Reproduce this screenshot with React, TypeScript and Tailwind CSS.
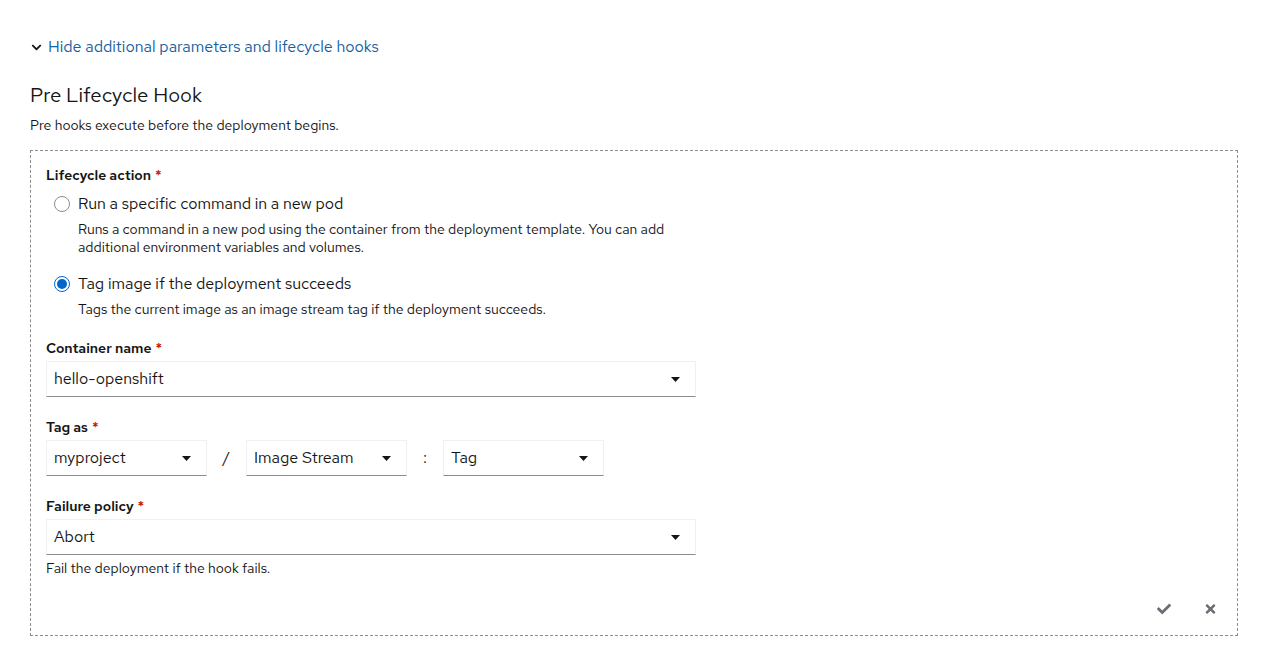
import React from 'react';

const font = { fontFamily: '"Red Hat Text", Inter, "Noto Sans", sans-serif' };

function Caret() {
  return (
    <svg width="9" height="5" viewBox="0 0 9 5" className="shrink-0">
      <path d="M0 0h9L4.5 5z" fill="#151515" />
    </svg>
  );
}

function Select({ value, className }: { value: string; className: string }) {
  return (
    <div
      className={`flex items-center justify-between h-[36px] pl-[7px] pr-[15px] border border-[#f0f0f0] border-b-[#8a8d90] bg-white text-[16px] text-[#151515] ${className}`}
    >
      <span>{value}</span>
      <Caret />
    </div>
  );
}

function Label({ text }: { text: string }) {
  return (
    <div className="text-[14px] font-semibold text-[#151515] leading-[20px] mb-[3px]">
      {text}
      <span className="text-[#c9190b] ml-[4px] align-top">*</span>
    </div>
  );
}

function Radio({ checked, label, desc }: { checked: boolean; label: string; desc: React.ReactNode }) {
  return (
    <div className="flex pl-[8px]">
      <div
        className={`w-[16px] h-[16px] mt-[4px] mr-[8px] shrink-0 rounded-full border flex items-center justify-center bg-white ${
          checked ? 'border-[#06c]' : 'border-[#8a8d90]'
        }`}
      >
        {checked && <div className="w-[10px] h-[10px] rounded-full bg-[#06c]" />}
      </div>
      <div>
        <div className="text-[16px] leading-[24px] text-[#151515]">{label}</div>
        <div className="text-[14px] leading-[18px] text-[#151515] mt-[4px]">{desc}</div>
      </div>
    </div>
  );
}

export default function App() {
  return (
    <div className="min-h-screen bg-white px-[30px] pt-[36px]" style={font}>
      <button className="flex items-center text-[#15609f] text-[16px] leading-[22px]">
        <svg width="11" height="11" viewBox="0 0 320 512" className="mr-[6px] ml-[1px]">
          <path
            transform="rotate(90 160 256)"
            d="M285.5 273L91.1 467.3c-9.4 9.4-24.6 9.4-33.9 0l-22.7-22.7c-9.4-9.4-9.4-24.5 0-33.9L188.5 256 34.5 101.3c-9.3-9.4-9.3-24.5 0-33.9l22.7-22.7c9.4-9.4 24.6-9.4 33.9 0L285.5 239c9.4 9.4 9.4 24.6 0 34z"
            fill="#151515"
          />
        </svg>
        Hide additional parameters and lifecycle hooks
      </button>

      <h2 className="mt-[22px] text-[20.5px] leading-[30px] text-[#151515]">Pre Lifecycle Hook</h2>
      <p className="mt-[5px] text-[14px] leading-[21px] text-[#151515]">Pre hooks execute before the deployment begins.</p>

      <div className="mt-[14px] w-[1208px] border border-dashed border-[#8a8d90] px-[15px] pt-[14px] pb-[19px]">
        <Label text="Lifecycle action" />
        <div className="flex flex-col gap-[16px] mt-[7px]">
          <Radio
            checked={false}
            label="Run a specific command in a new pod"
            desc={
              <>
                Runs a command in a new pod using the container from the deployment template. You can add
                <br />
                additional environment variables and volumes.
              </>
            }
          />
          <Radio
            checked
            label="Tag image if the deployment succeeds"
            desc="Tags the current image as an image stream tag if the deployment succeeds."
          />
        </div>

        <div className="mt-[20px]">
          <Label text="Container name" />
          <Select value="hello-openshift" className="w-[650px]" />
        </div>

        <div className="mt-[20px]">
          <Label text="Tag as" />
          <div className="flex items-center">
            <Select value="myproject" className="w-[161px]" />
            <span className="w-[39px] text-center text-[16px] text-[#151515]">/</span>
            <Select value="Image Stream" className="w-[161px]" />
            <span className="w-[36px] text-center text-[16px] text-[#151515]">:</span>
            <Select value="Tag" className="w-[161px]" />
          </div>
        </div>

        <div className="mt-[20px]">
          <Label text="Failure policy" />
          <Select value="Abort" className="w-[650px]" />
          <div className="mt-[4px] text-[14px] leading-[18px] text-[#151515]">Fail the deployment if the hook fails.</div>
        </div>

        <div className="flex justify-end items-center gap-[33px] pr-[6px] mt-[25px]">
          <svg width="16" height="14" viewBox="0 0 512 512">
            <path
              d="M173.9 439.4l-166.4-166.4c-10-10-10-26.2 0-36.2l36.2-36.2c10-10 26.2-10 36.2 0L192 312.7 432.1 72.6c10-10 26.2-10 36.2 0l36.2 36.2c10 10 10 26.2 0 36.2L210.1 439.4c-10 10-26.2 10-36.2 0z"
              fill="#6a6e73"
            />
          </svg>
          <svg width="11" height="14" viewBox="0 0 352 512">
            <path
              d="M242.7 256l100-100c12.3-12.3 12.3-32.2 0-44.5l-22.2-22.2c-12.3-12.3-32.2-12.3-44.5 0L176 189.3 76 89.3c-12.3-12.3-32.2-12.3-44.5 0L9.3 111.5c-12.3 12.3-12.3 32.2 0 44.5L109.3 256 9.3 356c-12.3 12.3-12.3 32.2 0 44.5l22.2 22.2c12.3 12.3 32.2 12.3 44.5 0L176 322.7l100 100c12.3 12.3 32.2 12.3 44.5 0l22.2-22.2c12.3-12.3 12.3-32.2 0-44.5L242.7 256z"
              fill="#6a6e73"
            />
          </svg>
        </div>
      </div>
    </div>
  );
}
